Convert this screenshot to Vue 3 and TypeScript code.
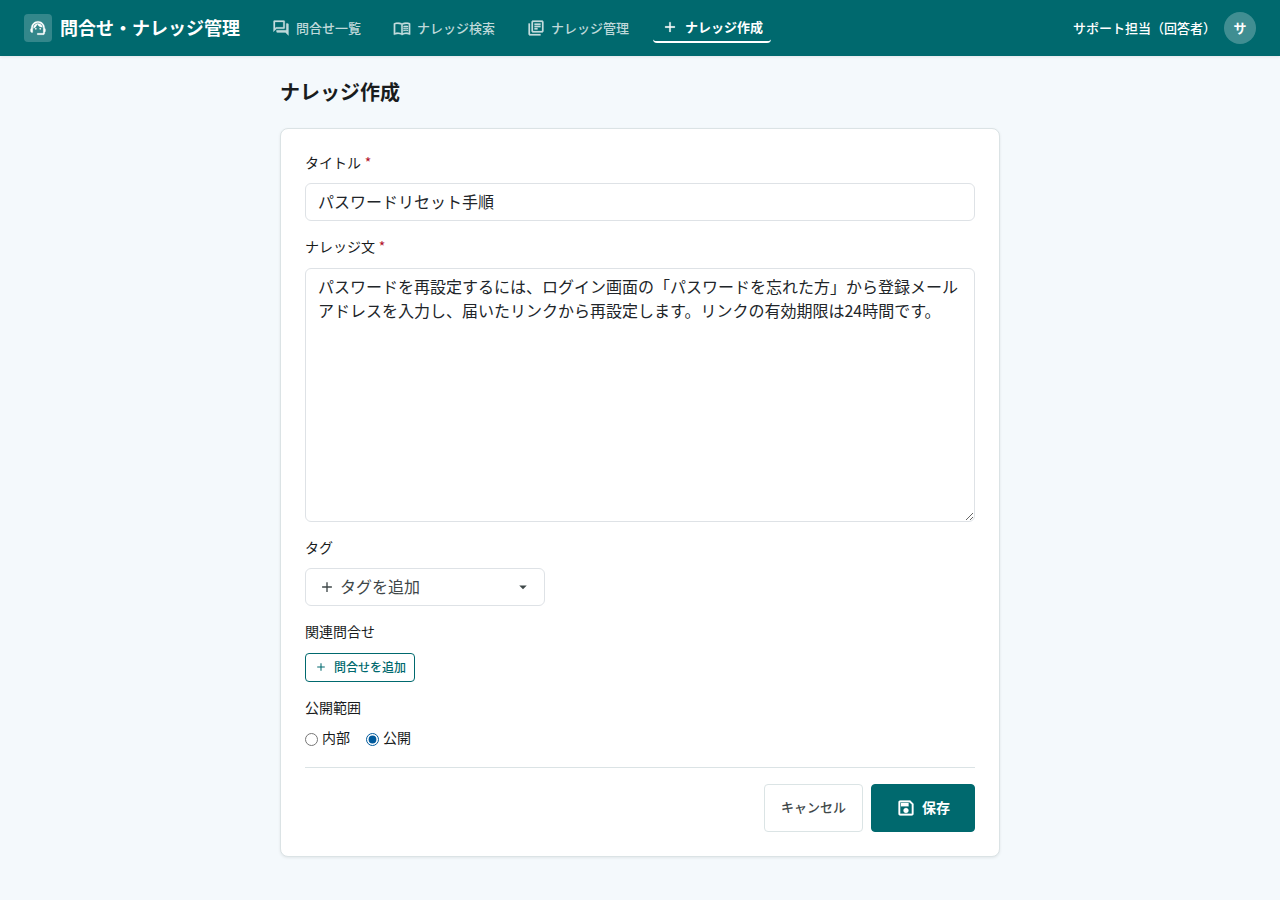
<script setup lang="ts">
import { ref } from 'vue'

interface NavItem {
  label: string
  paths: string[]
  active?: boolean
}

const addPath = 'M18.5 12.9h-5.6v5.6h-1.8v-5.6H5.5v-1.8h5.6V5.5h1.8v5.6h5.6z'

const navItems: NavItem[] = [
  {
    label: '問合せ一覧',
    paths: [
      'M15 4v7H5.17L4 12.17V4h11m1-2H3c-.55 0-1 .45-1 1v14l4-4h10c.55 0 1-.45 1-1V3c0-.55-.45-1-1-1zm5 4h-2v9H6v2c0 .55.45 1 1 1h11l4 4V7c0-.55-.45-1-1-1z',
    ],
  },
  {
    label: 'ナレッジ検索',
    paths: [
      'M21 5c-1.11-.35-2.33-.5-3.5-.5-1.95 0-4.05.4-5.5 1.5-1.45-1.1-3.55-1.5-5.5-1.5S2.45 4.9 1 6v14.65c0 .25.25.5.5.5.1 0 .15-.05.25-.05C3.1 20.45 5.05 20 6.5 20c1.95 0 4.05.4 5.5 1.5 1.35-.85 3.8-1.5 5.5-1.5 1.65 0 3.35.3 4.75 1.05.1.05.15.05.25.05.25 0 .5-.25.5-.5V6c-.6-.45-1.25-.75-2-1zM3 18.5V7c1.1-.35 2.3-.5 3.5-.5 1.34 0 3.13.41 4.5.99v11.5C9.63 18.41 7.84 18 6.5 18c-1.2 0-2.4.15-3.5.5zm18 0c-1.1-.35-2.3-.5-3.5-.5-1.34 0-3.13.41-4.5.99V7.49c1.37-.59 3.16-.99 4.5-.99 1.2 0 2.4.15 3.5.5v11.5z',
      'M17.5 10.5c.88 0 1.73.09 2.5.26V9.24c-.79-.15-1.64-.24-2.5-.24-1.27 0-2.46.16-3.5.47v1.57c.99-.35 2.18-.54 3.5-.54zM17.5 13.16c.88 0 1.73.09 2.5.26V11.9c-.79-.15-1.64-.24-2.5-.24-1.27 0-2.46.16-3.5.47v1.57c.99-.34 2.18-.54 3.5-.54zM17.5 14.33c-1.27 0-2.46.16-3.5.47v1.57c.99-.35 2.18-.54 3.5-.54.88 0 1.73.09 2.5.26v-1.52c-.79-.16-1.64-.24-2.5-.24z',
    ],
  },
  {
    label: 'ナレッジ管理',
    paths: [
      'M4 6H2v14c0 1.1.9 2 2 2h14v-2H4V6zm16-4H8c-1.1 0-2 .9-2 2v12c0 1.1.9 2 2 2h12c1.1 0 2-.9 2-2V4c0-1.1-.9-2-2-2zm0 14H8V4h12v12zM10 9h8v2h-8zm0 3h4v2h-4zm0-6h8v2h-8z',
    ],
  },
  { label: 'ナレッジ作成', paths: [addPath], active: true },
]

const title = ref('パスワードリセット手順')
const body = ref(
  'パスワードを再設定するには、ログイン画面の「パスワードを忘れた方」から登録メールアドレスを入力し、届いたリンクから再設定します。リンクの有効期限は24時間です。',
)
const scope = ref<'internal' | 'public'>('public')
</script>

<template>
  <div class="page">
    <header class="topbar">
      <div class="brand">
        <span class="brand-mark">
          <svg class="icon heavy" viewBox="0 0 24 24">
            <path d="M21 12.22C21 6.73 16.74 3 12 3c-4.69 0-9 3.65-9 9.28-.6.34-1 .98-1 1.72v2c0 1.1.9 2 2 2h1v-6.1c0-3.87 3.13-7 7-7s7 3.13 7 7V19h-8v2h8c1.1 0 2-.9 2-2v-1.22c.59-.31 1-.92 1-1.64v-2.3c0-.7-.41-1.31-1-1.62z" />
            <circle cx="9" cy="13" r="1" />
            <circle cx="15" cy="13" r="1" />
            <path d="M18 11.03C17.52 8.18 15.04 6 12.05 6c-3.03 0-6.29 2.51-6.03 6.45 2.47-1.01 4.33-3.21 4.86-5.89 1.31 2.63 4 4.44 7.12 4.47z" />
          </svg>
        </span>
        <span class="brand-name">問合せ・ナレッジ管理</span>
      </div>
      <nav class="nav">
        <a v-for="item in navItems" :key="item.label" class="nav-item" :class="{ active: item.active }">
          <svg class="icon heavy" viewBox="0 0 24 24">
            <path v-for="d in item.paths" :key="d" :d="d" />
          </svg>
          <span>{{ item.label }}</span>
        </a>
      </nav>
      <div class="user">
        <span class="user-name">サポート担当（回答者）</span>
        <span class="avatar">サ</span>
      </div>
    </header>

    <main class="main">
      <h1 class="heading">ナレッジ作成</h1>
      <form class="card" @submit.prevent>
        <div class="field">
          <label class="label" for="title">タイトル <span class="required">*</span></label>
          <input id="title" v-model="title" class="control" type="text" />
        </div>
        <div class="field">
          <label class="label" for="body">ナレッジ文 <span class="required">*</span></label>
          <textarea id="body" v-model="body" class="control" rows="10" spellcheck="false"></textarea>
        </div>
        <div class="field">
          <span class="label">タグ</span>
          <button class="tag-select" type="button">
            <svg class="icon" viewBox="0 0 24 24"><path :d="addPath" /></svg>
            <span class="tag-text">タグを追加</span>
            <svg class="icon" viewBox="0 0 24 24"><path d="M7 10l5 5 5-5z" /></svg>
          </button>
        </div>
        <div class="field">
          <span class="label">関連問合せ</span>
          <button class="btn-small" type="button">
            <svg class="icon" viewBox="0 0 24 24"><path :d="addPath" /></svg>
            <span>問合せを追加</span>
          </button>
        </div>
        <div class="field">
          <span class="label">公開範囲</span>
          <div class="radios">
            <label class="radio"><input v-model="scope" type="radio" value="internal" /><span>内部</span></label>
            <label class="radio"><input v-model="scope" type="radio" value="public" /><span>公開</span></label>
          </div>
        </div>
        <div class="actions">
          <button class="btn cancel" type="button"><span>キャンセル</span></button>
          <button class="btn save" type="submit">
            <svg class="icon heavy" viewBox="0 0 24 24">
              <path d="M17 3H5c-1.11 0-2 .9-2 2v14c0 1.1.89 2 2 2h14c1.1 0 2-.9 2-2V7l-4-4zm2 16H5V5h11.17L19 7.83V19zm-7-7c-1.66 0-3 1.34-3 3s1.34 3 3 3 3-1.34 3-3-1.34-3-3-3zM6 6h9v4H6z" />
            </svg>
            <span>保存</span>
          </button>
        </div>
      </form>
    </main>
  </div>
</template>

<style>
body {
  background: #f4f9fc;
}
</style>

<style scoped>
.page {
  min-height: 100vh;
  background: #f4f9fc;
  color: #191c1d;
  font-family: 'Noto Sans', 'Noto Sans CJK JP', sans-serif;
  font-size: 14px;
  line-height: 1.6;
}
.page *,
.page {
  box-sizing: border-box;
}
button,
input,
textarea {
  font-family: inherit;
}
.icon {
  display: block;
  flex: none;
  width: 18px;
  height: 18px;
  fill: currentColor;
}
.heavy {
  stroke: currentColor;
  stroke-width: 0.3;
}
.topbar {
  display: flex;
  align-items: center;
  gap: 24px;
  height: 56px;
  padding: 0 24px;
  background: #00696e;
  color: #fff;
  box-shadow: 0 1px 3px rgba(0, 0, 0, 0.08);
}
.brand {
  display: flex;
  align-items: center;
  gap: 8px;
}
.brand-mark {
  display: flex;
  align-items: center;
  justify-content: center;
  width: 28px;
  height: 28px;
  border-radius: 4px;
  background: rgba(255, 255, 255, 0.2);
}
.brand-name {
  font-size: 18px;
  font-weight: 700;
  white-space: nowrap;
}
.nav {
  display: flex;
  align-items: center;
  gap: 16px;
}
.nav-item {
  display: flex;
  align-items: center;
  gap: 6px;
  padding: 4px 8px;
  border-radius: 4px;
  color: rgba(255, 255, 255, 0.75);
  font-size: 13px;
  font-weight: 500;
  white-space: nowrap;
}
.nav-item.active {
  border-bottom: 2px solid #fff;
  color: #fff;
  font-weight: 700;
}
.user {
  display: flex;
  align-items: center;
  gap: 8px;
  margin-left: auto;
  font-size: 13px;
  font-weight: 500;
}
.avatar {
  display: flex;
  align-items: center;
  justify-content: center;
  width: 32px;
  height: 32px;
  border-radius: 50%;
  background: rgba(255, 255, 255, 0.25);
  font-weight: 700;
}
.main {
  width: 720px;
  margin: 0 auto;
  padding: 24px 0;
}
.heading {
  margin: 0 0 22px;
  font-size: 20px;
  font-weight: 700;
  line-height: 26px;
}
.card {
  display: flex;
  flex-direction: column;
  gap: 16px;
  padding: 24px;
  border: 1px solid #dbe3e5;
  border-radius: 8px;
  background: #fff;
  box-shadow: 0 1px 3px rgba(0, 0, 0, 0.08);
}
.field {
  display: flex;
  flex-direction: column;
  align-items: flex-start;
  gap: 8px;
}
.label {
  height: 22.4px;
  font-size: 14px;
  font-weight: 400;
  line-height: 20px;
}
.required {
  color: #b3132b;
  font-family: 'Noto Sans CJK JP', sans-serif;
  line-height: 1;
}
.control {
  display: block;
  width: 100%;
  margin: 0;
  padding: 5px 12px 7px;
  border: 1px solid #dee2e6;
  border-radius: 6px;
  outline: none;
  background: #fff;
  color: #212529;
  font-size: 16px;
  line-height: 24px;
}
input.control {
  height: 38px;
}
textarea.control {
  height: 254px;
  resize: vertical;
  font-family: 'Noto Sans CJK JP', sans-serif;
}
.tag-select {
  display: flex;
  align-items: center;
  gap: 4px;
  width: 240px;
  height: 38px;
  padding: 0 12px;
  border: 1px solid #dee2e6;
  border-radius: 6px;
  background: #fff;
  color: #3f4849;
  font-size: 16px;
  line-height: 24px;
}
.tag-text {
  flex: 1;
  text-align: left;
}
.btn-small {
  display: flex;
  align-items: center;
  gap: 6px;
  padding: 4px 8px;
  border: 1px solid #00696e;
  border-radius: 4px;
  background: #fff;
  color: #00696e;
  font-size: 12px;
  font-weight: 500;
  line-height: 19.2px;
}
.btn-small .icon {
  width: 14px;
  height: 14px;
}
.radios {
  display: flex;
  gap: 16px;
}
.radio {
  display: flex;
  align-items: center;
  gap: 4px;
}
.radio span {
  padding-bottom: 2.4px;
  line-height: 20px;
}
.radio input {
  width: 13px;
  height: 13px;
  margin: 0;
  accent-color: #005a9c;
}
.actions {
  display: flex;
  justify-content: flex-end;
  gap: 8px;
  padding-top: 16px;
  border-top: 1px solid #dbe3e5;
}
.btn {
  display: flex;
  align-items: center;
  gap: 6px;
  height: 48px;
  border: 1px solid #dbe4e5;
  border-radius: 4px;
}
.btn span {
  padding-bottom: 2px;
}
.cancel {
  padding: 0 16px;
  background: #fff;
  color: #3f4849;
  font-size: 13px;
  font-weight: 500;
}
.save {
  padding: 0 24px;
  border-color: #00696e;
  background: #00696e;
  color: #fff;
  font-size: 14px;
  font-weight: 700;
}
.save .icon {
  width: 20px;
  height: 20px;
}
</style>
